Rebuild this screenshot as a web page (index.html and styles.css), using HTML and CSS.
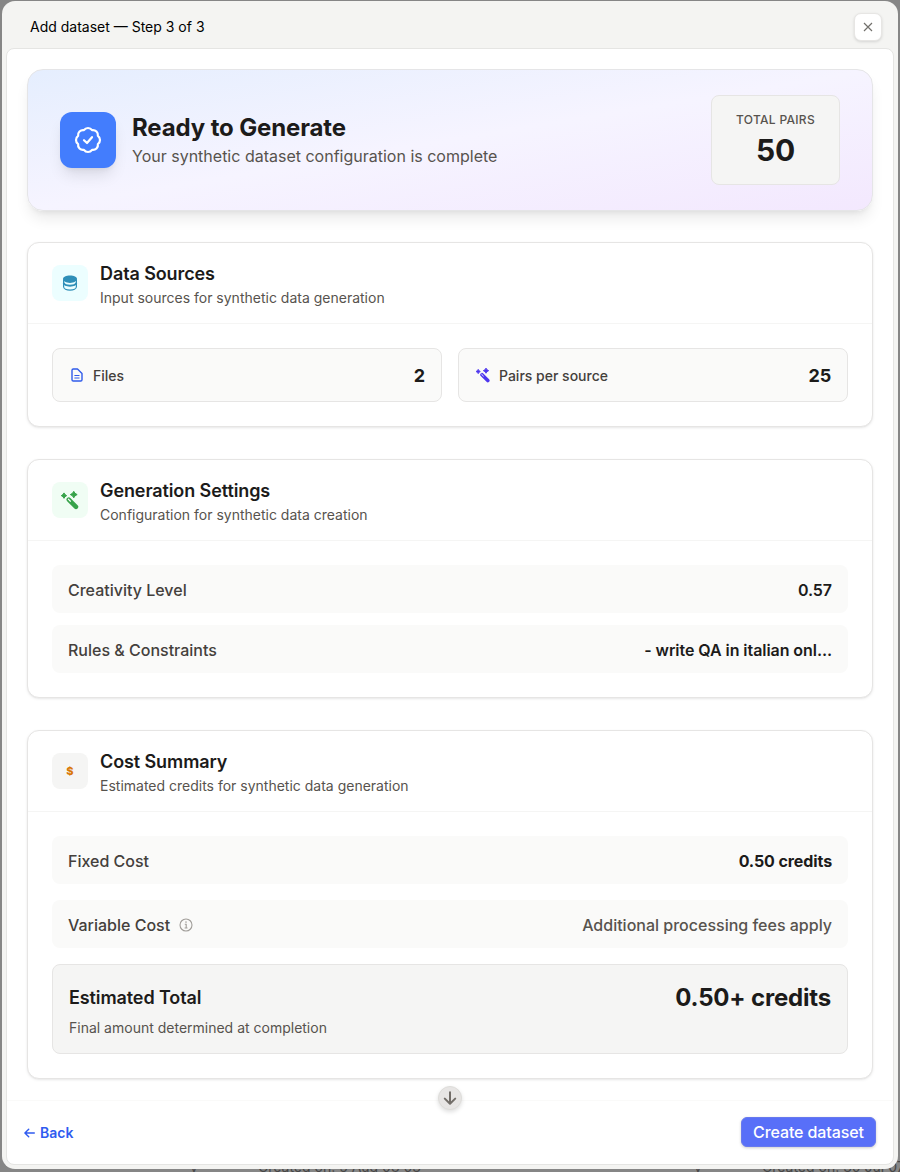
FILE: index.html
```
<!DOCTYPE html>
<html lang="en">
<head>
<meta charset="utf-8">
<title>Add dataset</title>
<link rel="stylesheet" href="styles.css">
</head>
<body>
<svg class="defs" aria-hidden="true">
  <symbol id="wand" viewBox="0 0 24 24">
    <path fill="currentColor" stroke="currentColor" stroke-width="1.200" stroke-linejoin="round" d="M16.500 1.600l1.500 2.400 2.600 1.500-2.600 1.500-1.500 2.400-1.500-2.400-2.600-1.500 2.600-1.500zM4.800 3.500l1.200 2 2 1.300-2 1.200-1.200 2-1.300-2-2-1.200 2-1.300z"/>
    <path stroke="currentColor" stroke-width="5.400" stroke-linecap="round" d="M10.500 11.500L19.200 20.200"/>
    <path stroke="#fff" stroke-width="1.400" stroke-linecap="round" d="M10 11L12.500 13.500"/>
  </symbol>
</svg>
<div class="behind"><span>y</span><span>Created on: 5 Aug 08 03</span><span>y</span><span>Created on: 30 Jul 07</span></div>
<div class="modal">
  <header class="titlebar">
    <span>Add dataset — Step 3 of 3</span>
    <button class="close" aria-label="Close"><svg width="10" height="10" viewBox="0 0 10 10"><path d="M1 1L9 9M9 1L1 9" stroke="#72706c" stroke-width="1.150"/></svg></button>
  </header>
  <div class="panel">
    <main class="content">
      <section class="hero">
        <div class="hero-icon"><svg width="32" height="32" viewBox="0 0 24 24" fill="none" stroke="#fff" stroke-width="1.650" stroke-linecap="round" stroke-linejoin="round"><path d="M9 12.200L11.250 14.300 15 9.900M21 12c0 1.268-.63 2.390-1.593 3.068a3.745 3.745 0 0 1-1.043 3.296 3.745 3.745 0 0 1-3.296 1.043A3.745 3.745 0 0 1 12 21c-1.268 0-2.390-.63-3.068-1.593a3.746 3.746 0 0 1-3.296-1.043 3.745 3.745 0 0 1-1.043-3.296A3.745 3.745 0 0 1 3 12c0-1.268.63-2.390 1.593-3.068a3.745 3.745 0 0 1 1.043-3.296 3.746 3.746 0 0 1 3.296-1.043A3.746 3.746 0 0 1 12 3c1.268 0 2.390.63 3.068 1.593a3.746 3.746 0 0 1 3.296 1.043 3.746 3.746 0 0 1 1.043 3.296A3.745 3.745 0 0 1 21 12z"/></svg></div>
        <div class="hero-text"><h1>Ready to Generate</h1><p>Your synthetic dataset configuration is complete</p></div>
        <div class="stat"><span class="stat-label">TOTAL PAIRS</span><span class="stat-value">50</span></div>
      </section>

      <section class="card">
        <div class="card-head">
          <div class="badge cyan"><svg width="16" height="16" viewBox="0 0 16 16"><path fill="#2f8fb8" d="M8 .6c3.900 0 7 1.500 7 3.500S11.900 8 8 8 1 6.200 1 4.100 4.100.6 8 .6z"/><path fill="none" stroke="#2f8fb8" stroke-width="1.200" d="M1.600 4.500v7.300c0 1.900 2.900 3.300 6.400 3.300s6.400-1.400 6.400-3.300V4.500"/><path fill="none" stroke="#2f8fb8" stroke-width="1.900" d="M1.600 7.800c.5 1.600 3 2.900 6.400 2.900s5.900-1.300 6.400-2.900"/></svg></div>
          <div class="heading"><h2>Data Sources</h2><p>Input sources for synthetic data generation</p></div>
        </div>
        <div class="card-body tiles">
          <div class="tile"><svg class="tile-icon" width="16" height="16" viewBox="0 0 16 16" fill="none" stroke="#2f5bea" stroke-width="1.400" stroke-linejoin="round"><path d="M4.300 2H8.500L13 6.500V12.700Q13 14 11.700 14H4.300Q3 14 3 12.700V3.300Q3 2 4.300 2z"/><path stroke-width="1.100" d="M5.400 8.500H10.500M5.400 11H10.500"/></svg><span>Files</span><b>2</b></div>
          <div class="tile"><svg class="tile-icon violet" width="16" height="16" fill="none"><use href="#wand"/></svg><span>Pairs per source</span><b>25</b></div>
        </div>
      </section>

      <section class="card">
        <div class="card-head">
          <div class="badge green"><svg width="20" height="20" fill="none"><use href="#wand"/></svg></div>
          <div class="heading"><h2>Generation Settings</h2><p>Configuration for synthetic data creation</p></div>
        </div>
        <div class="card-body rows">
          <div class="row"><span>Creativity Level</span><b>0.57</b></div>
          <div class="row"><span>Rules &amp; Constraints</span><b>- write QA in italian onl...</b></div>
        </div>
      </section>

      <section class="card">
        <div class="card-head">
          <div class="badge stone"><span class="dollar">$</span></div>
          <div class="heading"><h2>Cost Summary</h2><p>Estimated credits for synthetic data generation</p></div>
        </div>
        <div class="card-body rows loose">
          <div class="row"><span>Fixed Cost</span><b class="price">0.50 credits</b></div>
          <div class="row"><span class="with-info">Variable Cost <svg width="14" height="14" viewBox="0 0 14 14" fill="none" stroke="#a09d99" stroke-width="1.100"><circle cx="7" cy="7" r="6"/><path d="M5.800 6.300H7.200V10M5.600 10H8.500"/><circle cx="7" cy="4" r=".3"/></svg></span><span class="note">Additional processing fees apply</span></div>
          <div class="total">
            <div><h3>Estimated Total</h3><p>Final amount determined at completion</p></div>
            <strong>0.50+ credits</strong>
          </div>
        </div>
      </section>
    </main>
    <footer class="footer">
      <a class="back"><svg width="11" height="10" viewBox="0 0 11 10" fill="none" stroke="#2f5bf0" stroke-width="1.400" stroke-linecap="round" stroke-linejoin="round"><path d="M10.300 5H1M4.700 1.200L.9 5l3.800 3.800"/></svg>Back</a>
      <button class="create">Create dataset</button>
      <div class="scroll-down"><svg width="14" height="14" viewBox="0 0 14 14" fill="none" stroke="#726d68" stroke-width="2" stroke-linecap="round" stroke-linejoin="round"><path d="M7 1.300V12.500M1.800 7.600L7 12.700l5.200-5.100"/></svg></div>
    </footer>
  </div>
</div>
</body>
</html>
```
FILE: styles.css
```
* { box-sizing: border-box; }
body {
  margin: 0;
  width: 900px;
  height: 1172px;
  overflow: hidden;
  position: relative;
  padding: 1px 2px 3px;
  background: #868686;
  font-family: Inter, "Liberation Sans", sans-serif;
  color: #1c1b1a;
}
h1, h2, h3, p { margin: 0; }
button { font-family: inherit; border: 0; padding: 0; }
.defs { position: absolute; width: 0; height: 0; }
.behind {
  position: absolute;
  left: 190px;
  top: 1157px;
  display: grid;
  grid-template-columns: 68px 436px 68px auto;
  font-size: 14px;
  line-height: 20px;
  color: #474747;
  white-space: nowrap;
}
.modal {
  position: relative;
  height: 1168px;
  padding: 0 4px 4px;
  border-radius: 13px;
  background: #f4f4f2;
  display: flex;
  flex-direction: column;
}
.titlebar {
  height: 47px;
  flex: none;
  display: flex;
  align-items: center;
  justify-content: space-between;
  padding: 4px 12px 0 24px;
  font-size: 14px;
  color: #000;
}
.close {
  width: 28px;
  height: 28px;
  display: flex;
  align-items: center;
  justify-content: center;
  background: #fff;
  border: 1px solid #e7e6e4;
  border-radius: 7px;
  box-shadow: 0 1px 3px rgba(0,0,0,.13);
}
.panel {
  flex: 1;
  display: flex;
  flex-direction: column;
  background: #fff;
  border: 1px solid #e5e5e3;
  border-radius: 8px;
}
.content {
  height: 1051px;
  padding: 20px 20px 0;
  display: flex;
  flex-direction: column;
  gap: 32px;
}
.hero {
  height: 142px;
  flex: none;
  display: flex;
  align-items: center;
  margin-bottom: -1px;
  padding: 0 32px;
  border: 1px solid #e5e5e7;
  border-radius: 16px;
  background: linear-gradient(to bottom right, #e5eefe 0%, #f6f4ff 50%, #f3e8fe 100%);
  box-shadow: 0 10px 15px -3px rgba(0,0,0,.09), 0 4px 6px -4px rgba(0,0,0,.09);
}
.hero-icon {
  width: 56px;
  height: 56px;
  display: flex;
  align-items: center;
  justify-content: center;
  margin-bottom: 1px;
  border-radius: 12px;
  background: #437dfd;
  box-shadow: 0 10px 15px -3px rgba(0,0,0,.1), 0 4px 6px -4px rgba(0,0,0,.1);
}
.hero-text { margin-left: 16px; flex: 1; }
h1 { font-size: 24px; line-height: 32px; font-weight: 700; letter-spacing: -.13px; }
.hero-text p { font-size: 16px; line-height: 24px; color: #57534e; }
.stat {
  width: 129px;
  height: 90px;
  display: flex;
  flex-direction: column;
  align-items: center;
  padding-top: 16px;
  border: 1px solid #e6e5e4;
  border-radius: 8px;
  background: #f5f5f4;
}
.stat-label { font-size: 12px; line-height: 16px; font-weight: 500; letter-spacing: .3px; color: #57534e; }
.stat-value { margin-top: 4px; font-size: 30px; line-height: 36px; font-weight: 700; letter-spacing: -.3px; }
.card {
  flex: none;
  border: 1px solid #e6e5e4;
  border-radius: 12px;
  background: #fff;
  box-shadow: 0 1px 3px rgba(0,0,0,.08), 0 1px 2px -1px rgba(0,0,0,.08);
}
.card-head {
  height: 81px;
  display: flex;
  align-items: center;
  gap: 12px;
  padding: 0 24px;
  border-bottom: 1px solid #f5f5f4;
}
.heading { padding-top: 2px; }
.badge {
  width: 36px;
  height: 36px;
  display: flex;
  align-items: center;
  justify-content: center;
  border-radius: 8px;
}
.cyan { background: #ecfeff; }
.green { background: #f0fdf4; color: #37a34a; }
.stone { background: #f5f5f4; }
.violet { color: #4d35ee; }
.dollar { font-size: 11px; font-weight: 800; color: #d97706; }
h2 { font-size: 18px; line-height: 28px; font-weight: 600; letter-spacing: -.1px; }
.card-head p, .total p { font-size: 14px; line-height: 20px; color: #57534e; }
.card-body { padding: 24px; }
.tiles { display: grid; grid-template-columns: 1fr 1fr; gap: 16px; }
.tile {
  height: 54px;
  display: flex;
  align-items: center;
  padding: 0 16px;
  border: 1px solid #e6e5e4;
  border-radius: 8px;
  background: #fafaf9;
  font-size: 14px;
  font-weight: 500;
  color: #44403c;
}
.tile-icon { margin-right: 8px; }
.tile b { margin-left: auto; font-size: 18px; font-weight: 700; letter-spacing: -.2px; color: #1c1b1a; }
.rows { display: flex; flex-direction: column; gap: 12px; }
.loose { gap: 16px; }
.row {
  height: 48px;
  display: flex;
  align-items: center;
  justify-content: space-between;
  padding: 2px 16px 0;
  border-radius: 8px;
  background: #fafaf9;
  font-size: 16px;
  font-weight: 500;
  color: #44403c;
}
.row b { font-weight: 600; letter-spacing: -.06px; color: #1c1b1a; }
.row .price { font-weight: 700; letter-spacing: -.1px; }
.row .note { color: #57534e; }
.with-info { display: flex; align-items: center; gap: 9px; }
.total {
  height: 90px;
  display: flex;
  justify-content: space-between;
  padding: 19px 16px 0;
  border: 1px solid #e6e5e4;
  border-radius: 8px;
  background: #f5f5f4;
}
h3 { font-size: 18px; line-height: 28px; font-weight: 600; letter-spacing: -.1px; }
.total p { margin-top: 6px; }
.total strong { font-size: 24px; line-height: 28px; font-weight: 700; letter-spacing: -.18px; }
.footer {
  position: relative;
  flex: 1;
  display: flex;
  align-items: center;
  justify-content: space-between;
  padding: 0 17px;
  border-top: 1px solid #fafaf9;
}
.back {
  display: flex;
  align-items: center;
  gap: 5px;
  font-size: 14px;
  font-weight: 600;
  color: #2f5bf0;
}
.create {
  width: 135px;
  height: 30px;
  margin-bottom: 1px;
  border: 1px solid #6779ee;
  border-radius: 6px;
  background: #586ff8;
  color: #fff;
  font-size: 16px;
  font-weight: 500;
  letter-spacing: -.1px;
  box-shadow: 0 1px 3px rgba(0,0,0,.2);
}
.scroll-down {
  position: absolute;
  left: 431px;
  top: -15px;
  width: 24px;
  height: 24px;
  display: flex;
  align-items: center;
  justify-content: center;
  border: 1px solid #deddda;
  border-radius: 50%;
  background: #e7e5e4;
  box-shadow: 0 2px 4px rgba(0,0,0,.13);
}
```
